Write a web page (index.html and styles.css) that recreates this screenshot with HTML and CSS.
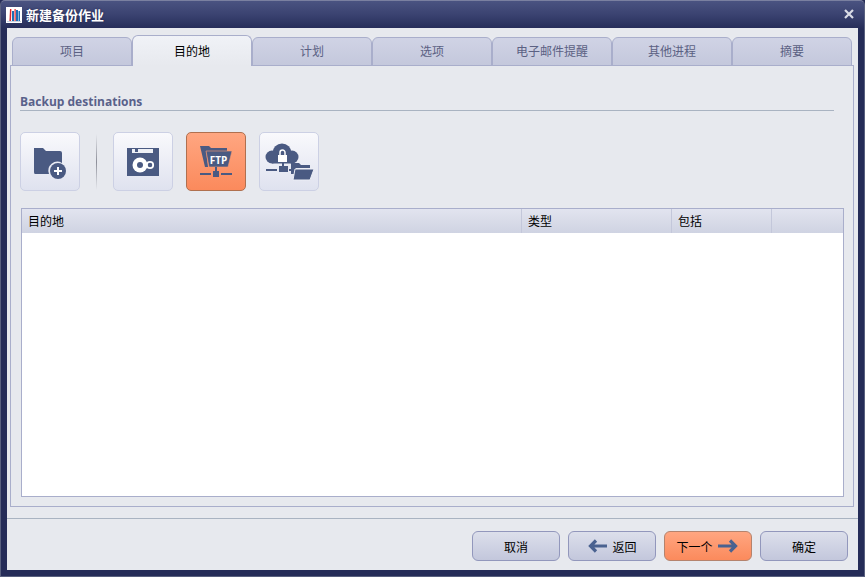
FILE: index.html
```html
<!DOCTYPE html>
<html lang="zh">
<head>
  <meta charset="UTF-8" />
  <title>新建备份作业</title>
  <link rel="stylesheet" href="styles.css">
</head>
<body>
  <div class="window">
    <div class="titlebar">
      <svg class="app-icon" width="16" height="16" viewBox="0 0 16 16">
        <rect width="16" height="16" fill="#fff"/>
        <rect x="1" y="14" width="14" height="1" fill="#c9d3e2"/>
        <path d="M4 2 L3.4 14 H5 L5.4 2 Z" fill="#e0282e"/>
        <rect x="6" y="4" width="2" height="10" fill="#1f6fb5"/>
        <rect x="8.5" y="2" width="1.2" height="12" fill="#e0282e"/>
        <rect x="10" y="3" width="2" height="11" fill="#1f6fb5"/>
        <rect x="12.5" y="4" width="1.5" height="10" fill="#1f6fb5"/>
      </svg>
      <span class="title">新建备份作业</span>
      <svg class="close" width="10" height="10" viewBox="0 0 10 10">
        <path d="M1 1 L9 9 M9 1 L1 9" stroke="#d9dce6" stroke-width="2.2" fill="none"/>
      </svg>
    </div>

    <div class="client">
      <div class="tabs">
        <div class="tab">项目</div>
        <div class="tab active">目的地</div>
        <div class="tab">计划</div>
        <div class="tab">选项</div>
        <div class="tab">电子邮件提醒</div>
        <div class="tab">其他进程</div>
        <div class="tab">摘要</div>
      </div>

      <div class="panel">
        <div class="heading">Backup destinations</div>

        <div class="toolbar">
          <div class="tool">
            <svg width="36" height="36" viewBox="0 0 36 36">
              <path d="M2 4 H11 L14 7 H28 Q30 7 30 9 V19 A9 9 0 0 0 17 30 H3 Q2 30 2 28 Z" fill="#4a5a82"/>
              <circle cx="26" cy="27" r="8" fill="#4a5a82"/>
              <path d="M26 23 V31 M22 27 H30" stroke="#fff" stroke-width="2"/>
            </svg>
          </div>
          <div class="divider"></div>
          <div class="tool">
            <svg width="32" height="28" viewBox="0 0 32 28">
              <rect width="32" height="28" fill="#4a5a82"/>
              <rect x="5" y="1" width="21" height="4" fill="#eef0f6"/>
              <rect x="8" y="1" width="3" height="3" fill="#4a5a82"/>
              <circle cx="13" cy="17" r="7.5" fill="#fff"/>
              <circle cx="13" cy="17" r="3" fill="#4a5a82"/>
              <circle cx="23" cy="17" r="3.2" fill="none" stroke="#fff" stroke-width="1.8"/>
            </svg>
          </div>
          <div class="tool selected">
            <svg width="34" height="32" viewBox="0 0 34 32">
              <path d="M1 0 H10 L12 2 H28 V5 H7 L9 21 H6 Z" fill="#4a5a82"/>
              <path d="M7 5 H33 L29 21 H10 Z" fill="#4a5a82" stroke="#fb9a72" stroke-width="0.6"/>
              <text class="ftp" x="19.5" y="17.5" text-anchor="middle">FTP</text>
              <path d="M1 28 H12 M22 28 H33 M17 21 V25" stroke="#4a5a82" stroke-width="2"/>
              <rect x="14" y="25" width="6" height="6" fill="#4a5a82"/>
            </svg>
          </div>
          <div class="tool">
            <svg width="50" height="38" viewBox="0 0 50 38">
              <circle cx="18" cy="10" r="9.5" fill="#4a5a82"/>
              <circle cx="8" cy="14" r="6.5" fill="#4a5a82"/>
              <circle cx="28" cy="14" r="6.5" fill="#4a5a82"/>
              <rect x="8" y="12" width="20" height="8.5" fill="#4a5a82"/>
              <rect x="14" y="12" width="9" height="7" fill="#fff"/>
              <path d="M16 12 V9.5 A2.5 2.5 0 0 1 21 9.5 V12" fill="none" stroke="#fff" stroke-width="1.5"/>
              <path d="M2 27 H13 M19 20 V24 M25 27 H30" stroke="#4a5a82" stroke-width="2"/>
              <rect x="15" y="23" width="9" height="6" fill="#4a5a82"/>
              <path d="M27 20 H35 L37 22 H46 V25 H32 L31 31 H27 Z" fill="#4a5a82"/>
              <path d="M31 26 H50 L46 37 H29 Z" fill="#4a5a82" stroke="#eceef5" stroke-width="1"/>
            </svg>
          </div>
        </div>

        <div class="grid">
          <div class="grid-head">
            <div class="col col-dest">目的地</div>
            <div class="col col-type">类型</div>
            <div class="col col-inc">包括</div>
            <div class="col col-rest"></div>
          </div>
        </div>
      </div>

      <div class="footer">
        <div class="btn">取消</div>
        <div class="btn">
          <svg class="arrow" width="20" height="14" viewBox="0 0 20 14">
            <path d="M9 1.5 L3.5 7 L9 12.5 M4 7 H20" fill="none" stroke="#4a6290" stroke-width="3.2"/>
          </svg>
          返回
        </div>
        <div class="btn primary">
          下一个
          <svg class="arrow" width="20" height="14" viewBox="0 0 20 14">
            <path d="M12 1.5 L17.5 7 L12 12.5 M17 7 H0" fill="none" stroke="#4a6290" stroke-width="3.2"/>
          </svg>
        </div>
        <div class="btn">确定</div>
      </div>
    </div>
  </div>
</body>
</html>
```

FILE: styles.css
```css
html, body {
  margin: 0;
  height: 100%;
}
body {
  font-family: "Noto Sans CJK SC", "Liberation Sans", sans-serif;
  font-size: 12px;
  color: #000;
  background: #252c58;
  overflow: hidden;
}
.window {
  height: 577px;
  box-sizing: border-box;
  padding-bottom: 6px;
  display: flex;
  flex-direction: column;
  border: 1px solid #59607f;
  border-top-color: #7a80a0;
  border-radius: 5px 5px 0 0;
  background: linear-gradient(#4a5381 0, #3a4270 14px, #252c58 28px);
}

/* title bar */
.titlebar {
  height: 27px;
  flex: none;
  display: flex;
  align-items: center;
  padding: 0 10px 0 5px;
}
.app-icon {
  margin-right: 4px;
}
.title {
  color: #fff;
  font-size: 13px;
  font-weight: bold;
  text-shadow: 0 0 2px #1b2048;
}
.close {
  margin-left: auto;
  margin-bottom: 2px;
}

.client {
  flex: 1;
  margin: 0 6px;
  background: #e7e9ee;
  display: flex;
  flex-direction: column;
}

/* tabs */
.tabs {
  display: flex;
  align-items: flex-end;
  height: 38px;
  padding-left: 5px;
  margin-bottom: -1px;
  position: relative;
  z-index: 1;
}
.tab {
  width: 120px;
  height: 29px;
  box-sizing: border-box;
  display: flex;
  align-items: center;
  justify-content: center;
  padding-bottom: 2px;
  color: #5b6183;
  background: linear-gradient(#d0d3e5, #c4c8dc);
  border: 1px solid #a9aecb;
  border-radius: 6px 6px 0 0;
}
.tab.active {
  height: 31px;
  color: #000;
  background: linear-gradient(#f0f2f7, #e7e9ee);
  border-bottom: none;
}

.panel {
  margin-left: 3px;
  width: 844px;
  height: 442px;
  box-sizing: border-box;
  border: 1px solid #a9aecb;
  padding: 0 9px;
  display: flex;
  flex-direction: column;
}
.heading {
  margin-top: 27px;
  height: 18px;
  width: 814px;
  box-sizing: border-box;
  line-height: 17px;
  font-family: "Open Sans", "Liberation Sans", sans-serif;
  font-weight: bold;
  color: #59618a;
  border-bottom: 1px solid #a9b3c1;
}

/* big icon buttons */
.toolbar {
  display: flex;
  align-items: center;
  margin-top: 21px;
}
.tool {
  width: 60px;
  height: 59px;
  box-sizing: border-box;
  display: flex;
  align-items: center;
  justify-content: center;
  border: 1px solid #ccd0e4;
  border-radius: 5px;
  background: linear-gradient(#f9f9fc, #dfe2ef);
  margin-right: 13px;
}
.tool.selected {
  border-color: #b0704f;
  background: linear-gradient(#ffa681, #fb8a5c);
}
.divider {
  width: 1px;
  height: 56px;
  margin: 0 16px 0 3px;
  background: linear-gradient(#e7e9ee, #8d8f99 50%, #e7e9ee);
}
.ftp {
  font-family: "Open Sans", "Liberation Sans", sans-serif;
  font-size: 10px;
  font-weight: bold;
  fill: #fff;
}

/* destinations grid */
.grid {
  margin: 17px 0 0 1px;
  width: 823px;
  height: 289px;
  box-sizing: border-box;
  background: #fff;
  border: 1px solid #a9aecb;
}
.grid-head {
  height: 24px;
  display: flex;
  background: linear-gradient(#e2e4ef, #cfd3e2);
}
.col {
  box-sizing: border-box;
  line-height: 24px;
  padding-left: 6px;
  border-right: 1px solid #c3c7da;
}
.col-dest { width: 500px; }
.col-type { width: 150px; }
.col-inc { width: 100px; }
.col-rest { flex: 1; border-right: none; }

/* bottom buttons */
.footer {
  margin-top: 11px;
  flex: 1;
  border-top: 1px solid #a9b3c1;
  display: flex;
  justify-content: flex-end;
  gap: 8px;
  padding: 12px 10px 0 0;
}
.btn {
  width: 88px;
  height: 30px;
  box-sizing: border-box;
  display: flex;
  align-items: center;
  justify-content: center;
  gap: 5px;
  border: 1px solid #9297bc;
  border-radius: 6px;
  background: linear-gradient(#dcdfeb, #c3c7dc);
}
.btn.primary {
  padding-right: 2px;
  border-color: #b5836d;
  background: linear-gradient(#ffa681, #fb8a5c);
}
```
